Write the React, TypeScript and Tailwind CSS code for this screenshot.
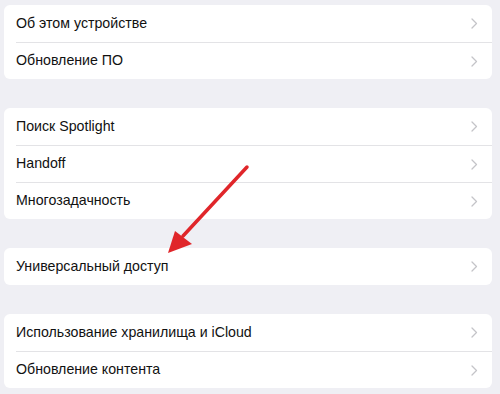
const groups = [
  ["Об этом устройстве", "Обновление ПО"],
  ["Поиск Spotlight", "Handoff", "Многозадачность"],
  ["Универсальный доступ"],
  ["Использование хранилища и iCloud", "Обновление контента"],
];

function Chevron() {
  return (
    <svg width="7" height="11" viewBox="0 0 7 11" fill="none" className="shrink-0">
      <path d="M1 1l4.5 4.5L1 10" stroke="#c4c4c8" strokeWidth="1.3" strokeLinecap="round" strokeLinejoin="round" />
    </svg>
  );
}

export default function App() {
  return (
    <div className="relative h-[394px] w-[500px] overflow-hidden bg-[#efeff4] pl-1 pr-2 pt-[5px] font-['Liberation_Sans',Arial,sans-serif]">
      <div className="flex flex-col gap-[29px]">
        {groups.map((rows, gi) => (
          <div key={gi} className="overflow-hidden rounded-md bg-white">
            {rows.map((label, i) => (
              <div key={label} className="pl-3">
                <div
                  className={
                    "flex h-[37px] items-center justify-between pr-[14px] text-[14.2px] text-[#111]" +
                    (i > 0 ? " border-t border-[#e3e3e6]" : "")
                  }
                >
                  <span>{label}</span>
                  <Chevron />
                </div>
              </div>
            ))}
          </div>
        ))}
      </div>
      <svg className="pointer-events-none absolute left-0 top-0" width="500" height="394" viewBox="0 0 500 394">
        <line x1="247" y1="167" x2="183" y2="236" stroke="#e0262a" strokeWidth="3.5" strokeLinecap="round" />
        <polygon points="168,253 175,231 192,244" fill="#e0262a" />
      </svg>
    </div>
  );
}
